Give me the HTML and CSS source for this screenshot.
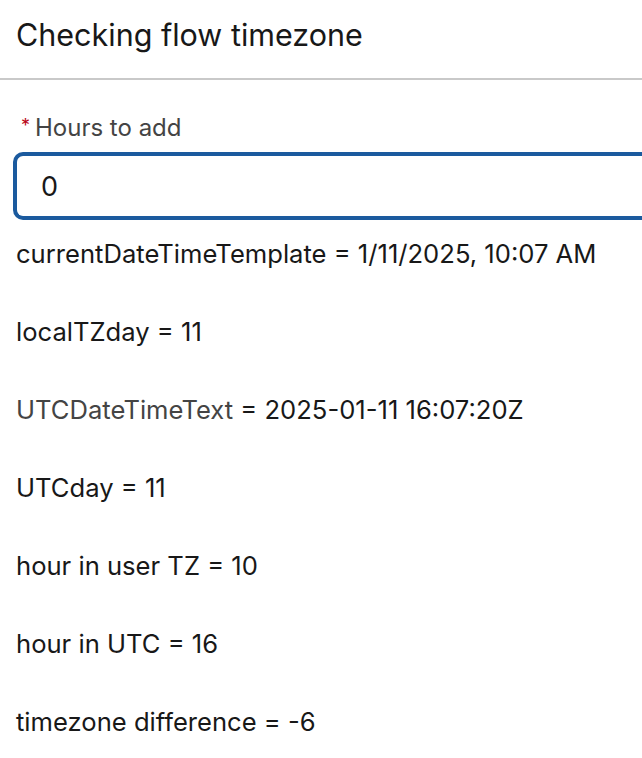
FILE: index.html
```html
<!DOCTYPE html>
<html>
<head>
<meta charset="utf-8">
<link rel="stylesheet" href="styles.css">
</head>
<body>
<div class="header"><h1 class="title">Checking flow timezone</h1></div>
<div class="body">
  <div class="field">
    <label class="label"><abbr class="req">*</abbr>Hours to add</label>
    <div class="input">0</div>
  </div>
  <div class="lines">
    <p class="line">currentDateTimeTemplate = 1/11/2025, 10:07 AM</p>
    <p class="line">localTZday = 11</p>
    <p class="line"><span class="muted">UTCDateTimeText</span> = 2025-01-11 16:07:20Z</p>
    <p class="line">UTCday = 11</p>
    <p class="line">hour in user TZ = 10</p>
    <p class="line">hour in UTC = 16</p>
    <p class="line">timezone difference = -6</p>
  </div>
</div>
</body>
</html>
```
FILE: styles.css
```css
html, body { margin: 0; padding: 0; background: #fff; }
body { font-family: Inter, Roboto, sans-serif; color: #181818; width: 642px; overflow: hidden; }
.header { height: 80px; border-bottom: 2px solid #c9c9c9; box-sizing: border-box; padding: 0 16px 7px; display: flex; align-items: center; }
.title { margin: 0; font-size: 30.5px; font-weight: 400; line-height: 1; }
.body { padding: 0 0 0 13px; }
.field { padding-top: 32px; }
.label { display: block; font-size: 24px; color: #444; padding-left: 8px; line-height: 28px; margin-bottom: 10px; }
.req { display: inline-block; width: 14px; color: #ba0517; text-decoration: none; font-size: 18px; vertical-align: 4px; }
.input { height: 68px; box-sizing: border-box; border: 4px solid #1b5a9e; border-right: none; border-radius: 10px 0 0 10px; margin-right: -20px; padding-left: 24px; display: flex; align-items: center; font-size: 27px; color: #181818; }
.lines { padding-left: 3px; margin-top: -5px; }
.line { margin: 0; font-size: 25.6px; line-height: 78px; height: 78px; }
.muted { color: #444; }
```
